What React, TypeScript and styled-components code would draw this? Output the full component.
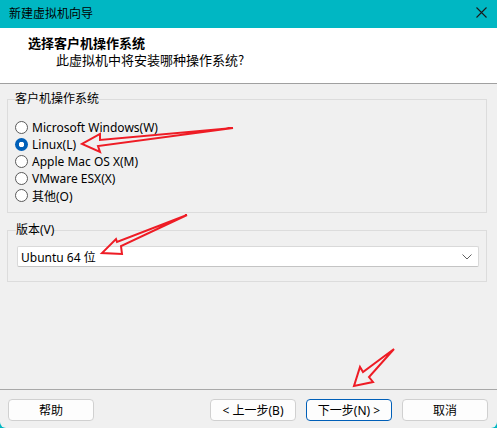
import React, { useState } from 'react'
import styled, { createGlobalStyle, css } from 'styled-components'

const GlobalStyle = createGlobalStyle`
  html, body {
    margin: 0;
    padding: 0;
    background: #00b7c3;
  }
  body {
    font-family: "Noto Sans", "Noto Sans CJK SC", sans-serif;
    font-size: 12px;
    color: #000;
  }
`

const Window = styled.div`
  position: relative;
  width: 497px;
  height: 428px;
  display: flex;
  flex-direction: column;
  background: #f0f0f0;
  border-radius: 0 0 6px 6px;
  overflow: hidden;
`

const TitleBar = styled.div`
  height: 28px;
  flex: none;
  display: flex;
  align-items: center;
  justify-content: space-between;
  padding: 0 10px 4px 9px;
  box-sizing: border-box;
  background: #00b7c3;
  font-family: "Noto Sans CJK SC", sans-serif;
`

const Header = styled.div`
  height: 56px;
  flex: none;
  box-sizing: border-box;
  padding-top: 6px;
  background: #fff;
  border-bottom: 1px solid #a0a0a0;
  font-family: "Noto Sans CJK SC", sans-serif;
  font-size: 13px;
  line-height: 17px;
`

const HeaderTitle = styled.div`
  padding-left: 28px;
  font-weight: 700;
`

const HeaderSub = styled.div`
  padding-left: 56px;
`

const Body = styled.div`
  flex: 1;
  padding: 0 10px 0 7px;
`

const Group = styled.fieldset<{ $top: number; $pad: string }>`
  margin: ${(p) => p.$top}px 0 0 0;
  padding: ${(p) => p.$pad};
  border: 1px solid #dcdcdc;
  min-width: 0;
`

const Legend = styled.legend`
  padding: 0;
  line-height: 16px;
`

const RadioRow = styled.label`
  display: flex;
  align-items: center;
  height: 17px;
  gap: 4px;
  cursor: default;
`

const RadioDot = styled.span<{ $on: boolean }>`
  width: 13px;
  height: 13px;
  box-sizing: border-box;
  border-radius: 50%;
  flex: none;
  ${(p) =>
    p.$on
      ? css`
          background: radial-gradient(circle, #fff 0 2.5px, #005fb8 3px);
        `
      : css`
          background: #fff;
          border: 1px solid #5a5a5a;
        `}
`

const Select = styled.div`
  height: 21px;
  margin-left: 1px;
  box-sizing: border-box;
  display: flex;
  align-items: center;
  justify-content: space-between;
  padding: 0 6px 0 3px;
  background: #fff;
  border: 1px solid #d9d9d9;
  border-bottom-color: #c4c4c4;
  border-radius: 2px;
`

const Footer = styled.div`
  height: 39px;
  flex: none;
  box-sizing: border-box;
  border-top: 1px solid #a8a8a8;
  padding: 9px 9px 0 8px;
  display: flex;
  gap: 10px;
`

const Button = styled.button<{ $primary?: boolean }>`
  width: 86px;
  height: 22px;
  box-sizing: border-box;
  padding: 0;
  background: #fdfdfd;
  border: 1px solid ${(p) => (p.$primary ? '#005fb8' : '#d0d0d0')};
  border-radius: 4px;
  font-family: "Noto Sans", "Noto Sans CJK SC", sans-serif;
  font-size: 12px;
  color: #000;
`

const Spacer = styled.div`
  flex: 1;
`

const Overlay = styled.svg`
  position: absolute;
  left: 0;
  top: 0;
  pointer-events: none;
`

const options = [
  'Microsoft Windows(W)',
  'Linux(L)',
  'Apple Mac OS X(M)',
  'VMware ESX(X)',
  '其他(O)',
]

export default function App() {
  const [os, setOs] = useState(1)

  return (
    <>
      <GlobalStyle />
      <Window>
        <TitleBar>
          <span>新建虚拟机向导</span>
          <svg width="11" height="11" viewBox="0 0 11 11">
            <path d="M0.5 0.5 L10.5 10.5 M10.5 0.5 L0.5 10.5" stroke="#1a1a1a" strokeWidth="1.1" />
          </svg>
        </TitleBar>
        <Header>
          <HeaderTitle>选择客户机操作系统</HeaderTitle>
          <HeaderSub>此虚拟机中将安装哪种操作系统?</HeaderSub>
        </Header>
        <Body>
          <Group $top={7} $pad="12px 0 8px 7px">
            <Legend>客户机操作系统</Legend>
            {options.map((o, i) => (
              <RadioRow key={o} onClick={() => setOs(i)}>
                <RadioDot $on={os === i} />
                {o}
              </RadioRow>
            ))}
          </Group>
          <Group $top={9} $pad="8px 7px 14px 8px">
            <Legend>版本(V)</Legend>
            <Select>
              <span>Ubuntu 64 位</span>
              <svg width="10" height="6" viewBox="0 0 10 6">
                <path d="M0.5 0.5 L5 5 L9.5 0.5" fill="none" stroke="#606060" strokeWidth="1" />
              </svg>
            </Select>
          </Group>
        </Body>
        <Footer>
          <Button>帮助</Button>
          <Spacer />
          <Button>&lt; 上一步(B)</Button>
          <Button $primary>下一步(N) &gt;</Button>
          <Button>取消</Button>
        </Footer>
        <Overlay width="497" height="428" viewBox="0 0 497 428">
          <g fill="none" stroke="#ee1c25" strokeWidth="2" strokeLinejoin="miter">
            <polygon points="233,128 100,140 100,134 82,144 100,152 98,146" />
            <polygon points="187,215 117,242 116,239 102,253 122,254 121,246" />
            <polygon points="394,349 363,372 360,367 354,386 373,382 369,377" />
          </g>
        </Overlay>
      </Window>
    </>
  )
}
